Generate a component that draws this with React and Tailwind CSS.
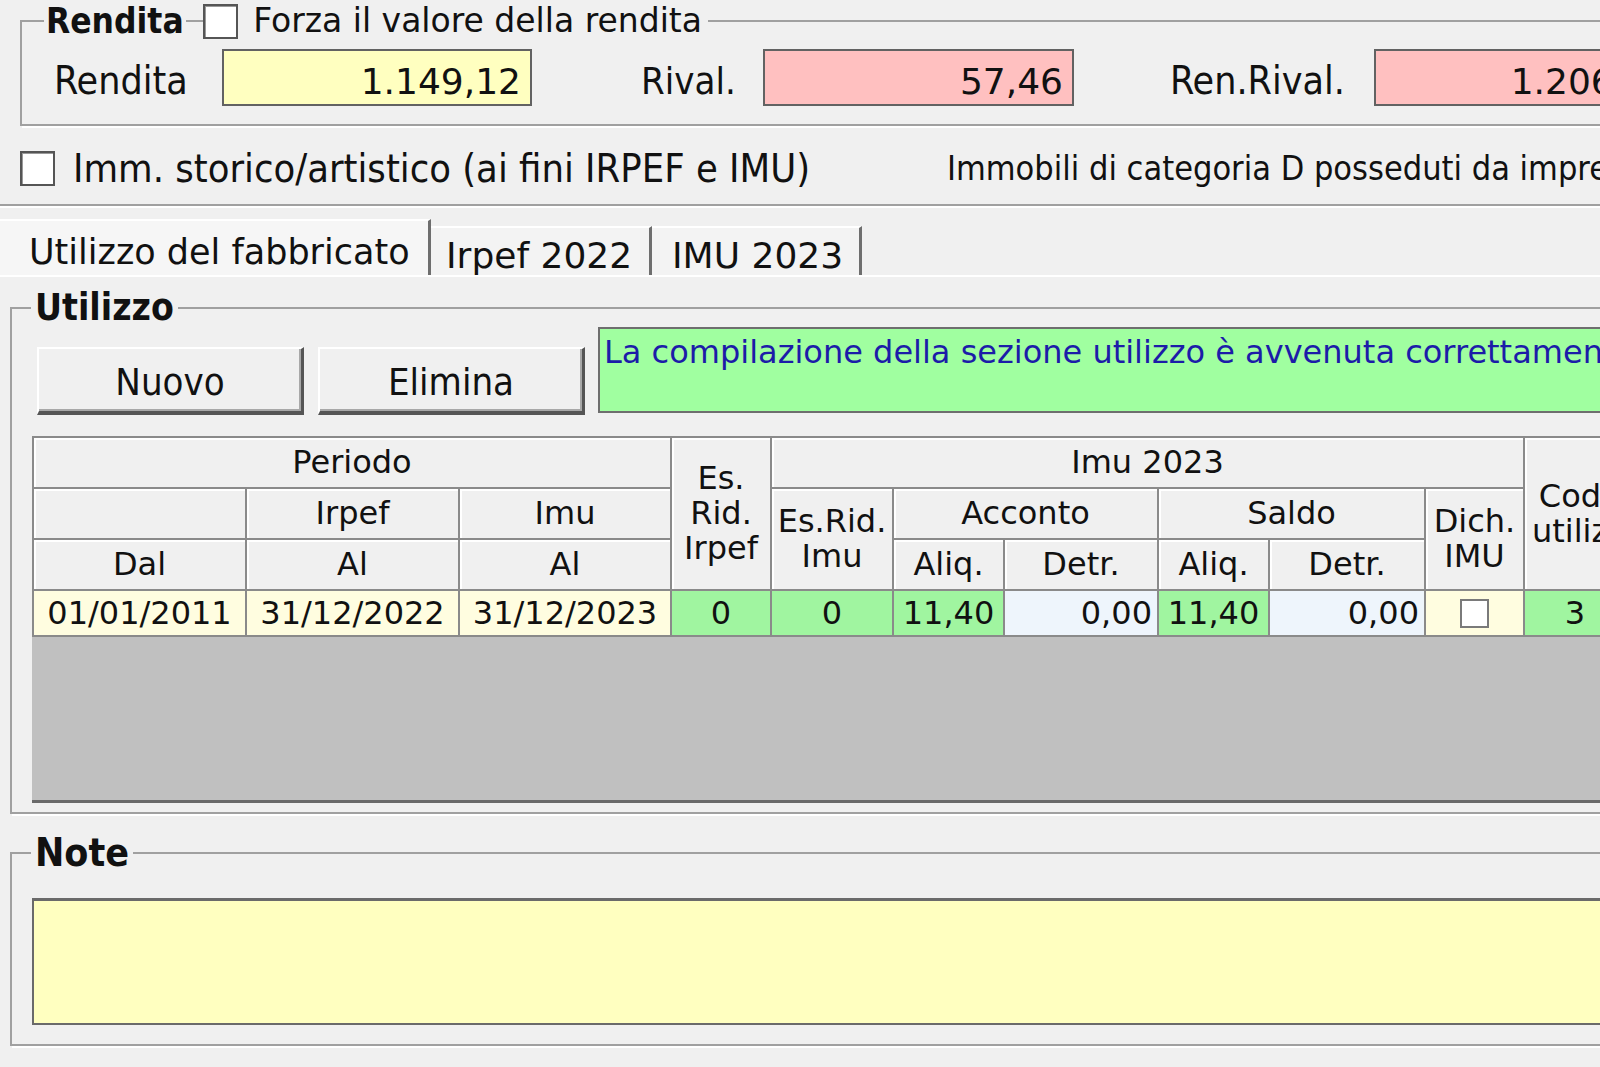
import React from 'react'

// font stacks (Tahoma-like = condensed, Verdana-like = DejaVu Sans)
const COND = "font-['DejaVu_Sans_Condensed','DejaVu_Sans',sans-serif]"
const VERD = "font-['DejaVu_Sans',sans-serif]"

function Check() {
  return <span className="block w-[35px] h-[35px] shrink-0 bg-white border-2 border-[#555] shadow-[inset_1px_1px_0_#999]" />
}

function Field({ value, bg, w }) {
  return (
    <div
      className={`${w} h-[57px] shrink-0 ${bg} border-2 border-[#626262] flex items-center justify-end pr-[9px] pt-[8px] ${VERD} text-[36px] text-[#111] whitespace-nowrap`}
    >
      {value}
    </div>
  )
}

function Button({ children, ml }) {
  return (
    <button
      className={`${ml} mt-[20px] w-[267px] h-[68px] shrink-0 bg-[#f0f0f0] border-t-2 border-l-2 border-t-white border-l-white border-r-[3px] border-b-[4px] border-r-[#555] border-b-[#555] shadow-[inset_-2px_-2px_0_#a8a8a8] pt-[4px] ${COND} text-[38px] text-[#111]`}
    >
      {children}
    </button>
  )
}

const head = 'bg-[#f0f0f0] shadow-[inset_2px_2px_0_#fff] flex flex-col items-center justify-center text-center leading-[35px]'
const yellow = 'bg-[#fffde0] flex items-center justify-center'
const green = 'bg-[#a0f5a0] flex items-center justify-center'
const blue = 'bg-[#eef5fc] flex items-center justify-end pr-[5px]'

function Grid() {
  return (
    <div className="ml-[20px] mt-[21px] w-[1620px] h-[367px] flex flex-col bg-[#c0c0c0] border-b-[3px] border-[#6a6a6a]">
      <div
        className={`grid grid-cols-[211px_211px_210px_98px_120px_109px_152px_109px_154px_97px_100px] grid-rows-[49px_49px_49px_44px] gap-[2px] p-[2px] bg-[#8a8a8a] w-max ${VERD} text-[32px] text-[#111] whitespace-nowrap`}
      >
        {/* header row 1 */}
        <div className={`${head} col-start-1 col-span-3 row-start-1`}>Periodo</div>
        <div className={`${head} col-start-4 row-start-1 row-span-3`}>
          <span>Es.</span>
          <span>Rid.</span>
          <span>Irpef</span>
        </div>
        <div className={`${head} col-start-5 col-span-6 row-start-1`}>Imu 2023</div>
        <div className="bg-[#f0f0f0] shadow-[inset_2px_2px_0_#fff] col-start-11 row-start-1 row-span-3 flex flex-col justify-center leading-[35px] overflow-hidden">
          <span className="text-center">Cod.</span>
          <span className="pl-[7px]">utilizzo</span>
        </div>

        {/* header row 2 */}
        <div className={`${head} col-start-1 row-start-2`} />
        <div className={`${head} col-start-2 row-start-2`}>Irpef</div>
        <div className={`${head} col-start-3 row-start-2`}>Imu</div>
        <div className={`${head} col-start-5 row-start-2 row-span-2`}>
          <span>Es.Rid.</span>
          <span>Imu</span>
        </div>
        <div className={`${head} col-start-6 col-span-2 row-start-2`}>Acconto</div>
        <div className={`${head} col-start-8 col-span-2 row-start-2`}>Saldo</div>
        <div className={`${head} col-start-10 row-start-2 row-span-2`}>
          <span>Dich.</span>
          <span>IMU</span>
        </div>

        {/* header row 3 */}
        <div className={`${head} col-start-1 row-start-3`}>Dal</div>
        <div className={`${head} col-start-2 row-start-3`}>Al</div>
        <div className={`${head} col-start-3 row-start-3`}>Al</div>
        <div className={`${head} col-start-6 row-start-3`}>Aliq.</div>
        <div className={`${head} col-start-7 row-start-3`}>Detr.</div>
        <div className={`${head} col-start-8 row-start-3`}>Aliq.</div>
        <div className={`${head} col-start-9 row-start-3`}>Detr.</div>

        {/* dati */}
        <div className={`${yellow} col-start-1 row-start-4`}>01/01/2011</div>
        <div className={`${yellow} col-start-2 row-start-4`}>31/12/2022</div>
        <div className={`${yellow} col-start-3 row-start-4`}>31/12/2023</div>
        <div className={`${green} col-start-4 row-start-4`}>0</div>
        <div className={`${green} col-start-5 row-start-4`}>0</div>
        <div className={`${green} col-start-6 row-start-4`}>11,40</div>
        <div className={`${blue} col-start-7 row-start-4`}>0,00</div>
        <div className={`${green} col-start-8 row-start-4`}>11,40</div>
        <div className={`${blue} col-start-9 row-start-4`}>0,00</div>
        <div className={`${yellow} col-start-10 row-start-4`}>
          <span className="w-[29px] h-[29px] bg-white border-2 border-[#7a7a7a]" />
        </div>
        <div className={`${green} col-start-11 row-start-4`}>3</div>
      </div>
    </div>
  )
}

export default function App() {
  return (
    <div className="w-[1600px] h-[1067px] overflow-hidden bg-[#f0f0f0] text-[#111]">
      {/* Rendita */}
      <fieldset className="ml-[20px] mt-[1px] w-[1700px] border-2 border-[#a0a0a0] shadow-[2px_2px_0_#fff] pb-[18px]">
        <legend className="ml-[22px] w-[664px] h-[40px] flex items-center">
          <span className={`px-[2px] ${COND} font-bold text-[35px]`}>Rendita</span>
          <span className="flex-1 h-[2px] bg-[#a0a0a0]" />
          <Check />
          <span className={`ml-[15px] pr-[6px] ${VERD} text-[33px] whitespace-nowrap`}>Forza il valore della rendita</span>
        </legend>
        <div className="mt-[8px] flex items-center h-[57px]">
          <span className={`ml-[32px] w-[168px] h-[57px] pt-[7px] flex items-center shrink-0 ${COND} text-[39px]`}>Rendita</span>
          <Field value="1.149,12" bg="bg-[#ffffc0]" w="w-[310px]" />
          <span className={`ml-[109px] w-[122px] h-[57px] pt-[7px] flex items-center shrink-0 ${COND} text-[38px]`}>Rival.</span>
          <Field value="57,46" bg="bg-[#ffc0c0]" w="w-[311px]" />
          <span className={`ml-[96px] w-[204px] h-[57px] pt-[7px] flex items-center shrink-0 ${COND} text-[39px] whitespace-nowrap`}>Ren.Rival.</span>
          <Field value="1.206,58" bg="bg-[#ffc0c0]" w="w-[308px]" />
        </div>
      </fieldset>

      {/* storico / categoria D */}
      <div className="mt-[25px] h-[35px] flex items-center whitespace-nowrap">
        <span className="ml-[20px]"><Check /></span>
        <span className={`ml-[18px] w-[874px] shrink-0 ${COND} text-[39.5px]`}>
          Imm. storico/artistico (ai fini IRPEF e IMU)
        </span>
        <span className={`${COND} text-[34px]`}>Immobili di categoria D posseduti da imprese</span>
      </div>

      <div className="mt-[18px] border-t-2 border-[#a0a0a0] border-b-2 border-b-white" />

      {/* tabs */}
      <div className={`h-[69px] flex items-end border-b-2 border-white ${VERD} whitespace-nowrap`}>
        <div className="w-[431px] h-[56px] pl-[29px] pt-[8px] flex items-center bg-[#f6f6f6] border-t-2 border-white border-r-[3px] border-r-[#6e6e6e] text-[35px]">
          Utilizzo del fabbricato
        </div>
        <div className="w-[221px] h-[49px] pl-[15px] pt-[8px] flex items-center bg-[#f3f3f3] border-t-2 border-white border-r-[3px] border-r-[#6e6e6e] text-[36px]">
          Irpef 2022
        </div>
        <div className="w-[210px] h-[49px] pl-[20px] pt-[8px] flex items-center bg-[#f3f3f3] border-t-2 border-white border-r-[3px] border-r-[#6e6e6e] text-[36px]">
          IMU 2023
        </div>
      </div>

      {/* Utilizzo */}
      <fieldset className="ml-[10px] mt-[13px] w-[1700px] border-2 border-[#a0a0a0] shadow-[2px_2px_0_#fff] pb-[9px]">
        <legend className="ml-[19px] px-[4px] h-[36px] flex items-center">
          <span className={`${COND} font-bold text-[37px]`}>Utilizzo</span>
        </legend>
        <div className="mt-[1px] flex items-start">
          <Button ml="ml-[25px]">Nuovo</Button>
          <Button ml="ml-[14px]">Elimina</Button>
          <div
            className={`ml-[13px] w-[1100px] h-[86px] bg-[#a0ffa0] border-2 border-[#6e6e6e] pl-[4px] pt-[3px] ${VERD} text-[32px] leading-[40px] text-[#1c1ca8] whitespace-nowrap`}
          >
            La compilazione della sezione utilizzo è avvenuta correttamente
          </div>
        </div>
        <Grid />
      </fieldset>

      {/* Note */}
      <fieldset className="ml-[10px] mt-[19px] w-[1700px] border-2 border-[#a0a0a0] shadow-[2px_2px_0_#fff] pb-[19px]">
        <legend className="ml-[19px] px-[4px] h-[40px] flex items-center">
          <span className={`${COND} font-bold text-[39px]`}>Note</span>
        </legend>
        <div className="ml-[20px] mt-[25px] w-[1620px] h-[127px] bg-[#ffffc0] border-2 border-t-[3px] border-[#6a6a6a]" />
      </fieldset>
    </div>
  )
}
